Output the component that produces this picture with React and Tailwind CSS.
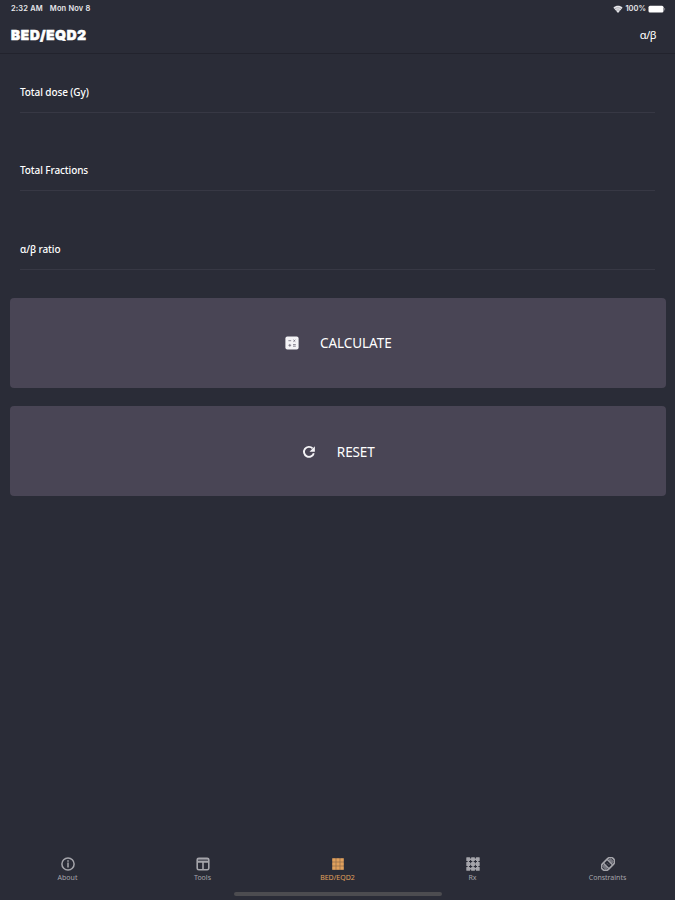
import React from 'react';

const fields = ['Total dose (Gy)', 'Total Fractions', 'α/β ratio'];

const InfoIcon = () => (
  <svg viewBox="0 0 14 14" className="w-3.5 h-3.5" fill="none" stroke="currentColor">
    <circle cx="7" cy="7" r="6.1" strokeWidth="1.5" />
    <path d="M7 3.2v1.5M7 5.6v5" strokeWidth="1.5" />
  </svg>
);

const ToolsIcon = () => (
  <svg viewBox="0 0 14 14" className="w-3.5 h-3.5" fill="none" stroke="currentColor" strokeWidth="1.6">
    <rect x="1.2" y="1.2" width="11.6" height="11.6" rx="1.6" />
    <path d="M1.2 4.9h11.6M7 5.3v7.5" />
    <path d="M1.2 2.8h11.6" opacity="0.6" />
  </svg>
);

const GridIcon = () => (
  <svg viewBox="0 0 14 14" className="w-3.5 h-3.5" fill="currentColor">
    <rect x="1.3" y="1.3" width="11.4" height="11.6" opacity="0.5" />
    {[1.3, 5.3, 9.3].map((y) =>
      [1.3, 5.3, 9.3].map((x) => <rect key={`${x}-${y}`} x={x} y={y} width="3.4" height="3.4" />)
    )}
  </svg>
);

const DotsIcon = () => (
  <svg viewBox="0 0 14 14" className="w-3.5 h-3.5" fill="currentColor">
    <path d="M2.3 2.3h9.4v9.4H2.3zM7 2v10M2 7h10" fill="none" stroke="currentColor" strokeWidth="1.4" />
    {[0.3, 5.1, 9.9].map((y) =>
      [0.3, 5.1, 9.9].map((x) => <rect key={`${x}-${y}`} x={x} y={y} width="3.8" height="3.8" rx="0.5" />)
    )}
  </svg>
);

const BandageIcon = () => (
  <svg viewBox="0 0 14 14" className="w-3.5 h-3.5" fill="none" stroke="currentColor">
    <g transform="rotate(-45 7 7)">
      <rect x="-0.6" y="2.9" width="15.2" height="8.2" rx="4.1" strokeWidth="1.6" />
      <path d="M1 7h3.2M9.8 7h3.2" strokeWidth="5.4" opacity="0.6" />
      <path d="M4.4 3.3v7.4M9.6 3.3v7.4" strokeWidth="1.2" />
      <path d="M6 6.2h0.8M7.4 8h0.8" strokeWidth="0.8" />
    </g>
  </svg>
);

const CalculatorIcon = () => (
  <svg viewBox="0 0 14 14" className="w-3.5 h-3.5">
    <rect x="0.4" y="0.4" width="13.2" height="13.2" rx="2" fill="#f4f3f6" />
    <path
      d="M3.4 4.7h2.8M8.4 3.8l1.9 1.9M10.3 3.8L8.4 5.7M3.4 9.3h2.8M4.8 7.9v2.8M8 8.6h2.8M8 10.2h2.8"
      stroke="#6b6776"
      strokeWidth="0.8"
      fill="none"
    />
  </svg>
);

const ReloadIcon = () => (
  <svg viewBox="0 0 14 14" className="w-3.5 h-3.5" fill="none" stroke="#f4f3f6">
    <path d="M10.6 3.4A5 5 0 1 0 11.8 8.2" strokeWidth="1.9" />
    <path d="M12.9 1.3v5.4H7.5z" fill="#f4f3f6" stroke="none" />
  </svg>
);

const tabs = [
  { label: 'About', icon: InfoIcon },
  { label: 'Tools', icon: ToolsIcon },
  { label: 'BED/EQD2', icon: GridIcon, active: true },
  { label: 'Rx', icon: DotsIcon },
  { label: 'Constraints', icon: BandageIcon },
];

const StatusBar = () => (
  <div className="flex h-4 items-center justify-between pl-[11px] pr-[9px] pt-px text-[7.5px] font-semibold leading-[15px] text-[#e6e6ea] font-['Inter',sans-serif]">
    <div className="flex gap-[7px] tracking-[0.15px]">
      <span>2:32 AM</span>
      <span>Mon Nov 8</span>
    </div>
    <div className="flex items-center gap-[2px]">
      <svg viewBox="0 0 10 8" className="w-[10px] h-2" fill="currentColor">
        <path d="M5 8L0.4 2.7C3 0.2 7 0.2 9.6 2.7z" />
        <path d="M1.4 4.1c2-1.8 5.2-1.8 7.2 0M2.8 5.7c1.3-1.1 3.1-1.1 4.4 0" fill="none" stroke="#2a2c37" strokeWidth="0.3" />
      </svg>
      <span>100%</span>
      <svg viewBox="0 0 18 8" className="w-[18px] h-2">
        <rect x="0.5" y="0.8" width="15" height="6.8" rx="1.5" fill="#fff" />
        <path d="M16.6 3v2.4" stroke="#85858e" strokeWidth="0.9" />
      </svg>
    </div>
  </div>
);

const App = () => {
  return (
    <div className="flex h-[900px] w-[675px] flex-col overflow-hidden bg-[#2a2c37] text-white font-['Noto_Sans','Open_Sans',sans-serif]">
      <StatusBar />

      {/* Header */}
      <header className="flex h-[38px] items-center justify-between border-b border-[#22232d] pl-[11px] pr-[19px]">
        <h1 className="text-[13.5px] font-black leading-4 tracking-[0.8px] [-webkit-text-stroke:0.6px_white] font-['Inter',sans-serif]">
          BED/EQD2
        </h1>
        <button className="pt-px text-[11px] leading-4 tracking-[-0.5px]">α/β</button>
      </header>

      {/* Inputs */}
      <div className="flex flex-col gap-[37px] px-5 pt-[17px]">
        {fields.map((label) => (
          <div key={label} className="flex h-[41.5px] items-center border-b border-[#373844] pt-px">
            <label className="text-[10px] font-medium leading-4 tracking-[-0.1px]">{label}</label>
          </div>
        ))}
      </div>

      {/* Actions */}
      <div className="flex flex-col gap-[18px] pl-[9.5px] pr-[9px] pt-[28.5px]">
        <button className="flex h-[90px] items-center justify-center gap-[21px] rounded-[4px] bg-[#494555] pl-px text-[13.5px] tracking-[-0.05px]">
          <CalculatorIcon />
          <span>CALCULATE</span>
        </button>
        <button className="flex h-[90px] items-center justify-center gap-[21px] rounded-[4px] bg-[#494555] pl-px pt-[2px] text-[13.5px] tracking-[-0.1px]">
          <ReloadIcon />
          <span>RESET</span>
        </button>
      </div>

      {/* Tab bar */}
      <nav className="mt-auto grid h-[35px] grid-cols-5">
        {tabs.map(({ label, icon: Icon, active }) => (
          <div key={label} className={`flex flex-col items-center ${active ? 'text-[#e0a05c]' : 'text-[#a5a5ab]'}`}>
            <Icon />
            <span className="mt-[2px] text-[7px] leading-[10px]">{label}</span>
          </div>
        ))}
      </nav>
      <div className="mx-auto mb-[4px] h-[4px] w-[208px] shrink-0 rounded-full bg-[#4c4c50]" />
    </div>
  );
};

export default App;
